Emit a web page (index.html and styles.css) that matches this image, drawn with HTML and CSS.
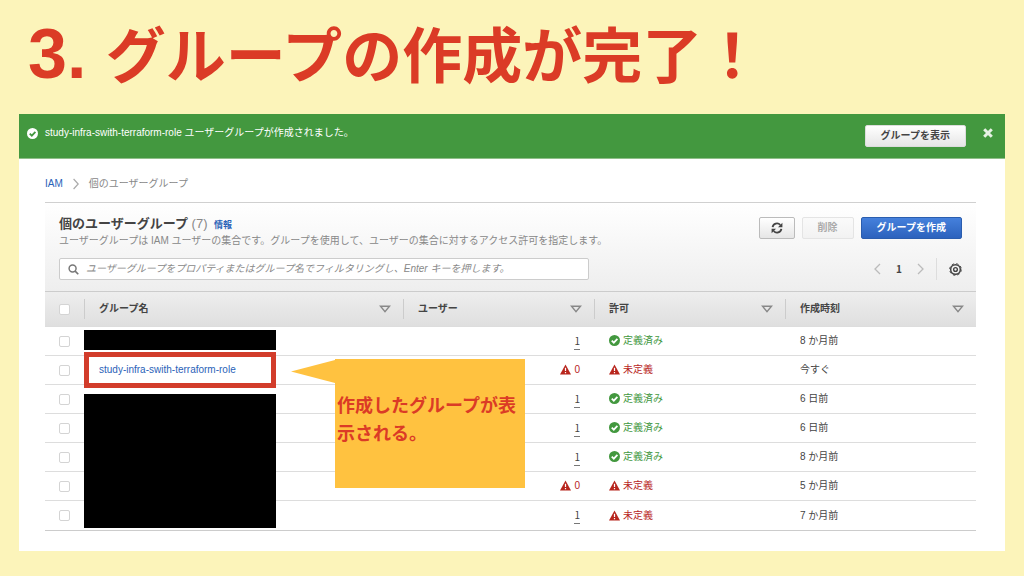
FILE: index.html
```html
<!DOCTYPE html>
<html lang="ja">
<head>
<meta charset="utf-8">
<title>グループの作成が完了</title>
<link rel="stylesheet" href="styles.css">
</head>
<body>
<svg class="defs" aria-hidden="true">
  <symbol id="ok" viewBox="0 0 16 16"><circle cx="8" cy="8" r="8" fill="currentColor"/><path class="tick" d="M4 8.2l3 3 5.2-5.4" fill="none" stroke-width="2.6"/></symbol>
  <symbol id="warn" viewBox="0 0 16 16"><path d="M8 .8L16 15.2H0z" fill="currentColor"/><path d="M8 5.6v4.6M8 11.5v2" stroke="#fff" stroke-width="1.8"/></symbol>
  <symbol id="sort" viewBox="0 0 12 8"><path d="M1.5 1.2h9L6 6.6z" fill="none" stroke="currentColor" stroke-width="1.4"/></symbol>
</svg>
<h1 class="slide-title"><span class="num">3. </span>グループの作成が完了！</h1>
<main class="panel">
  <div class="banner" role="status">
    <svg class="icon banner-ok"><use href="#ok"/></svg>
    <p class="banner-text">study-infra-swith-terraform-role ユーザーグループが作成されました。</p>
    <button class="btn show">グループを表示</button>
    <button class="close" aria-label="閉じる"><svg viewBox="0 0 10 10"><path d="M1.2 1.2l7.6 7.6M8.8 1.2L1.2 8.8" stroke="currentColor" stroke-width="3"/></svg></button>
  </div>
  <nav class="crumbs">
    <a href="#">IAM</a>
    <svg class="crumb-sep" viewBox="0 0 6 12"><path d="M.6 1l4.6 5L.6 11" fill="none" stroke="currentColor" stroke-width="1.2"/></svg>
    <span>個のユーザーグループ</span>
  </nav>
  <section class="groups">
    <header class="head">
      <div class="head-row">
        <div class="head-text">
          <h2>個のユーザーグループ <span class="count">(7)</span> <a class="info" href="#">情報</a></h2>
          <p>ユーザーグループは IAM ユーザーの集合です。グループを使用して、ユーザーの集合に対するアクセス許可を指定します。</p>
        </div>
        <div class="actions">
          <button class="btn refresh" aria-label="更新"><svg viewBox="0 0 12 12"><path d="M1.6 5.2A4.4 4.4 0 0 1 9.3 3M10.4 6.8A4.4 4.4 0 0 1 2.7 9" fill="none" stroke="currentColor" stroke-width="1.8"/><path d="M11.4 .8v4.4H7zM.6 11.2V6.8H5z" fill="currentColor"/></svg></button>
          <button class="btn" disabled>削除</button>
          <button class="btn primary">グループを作成</button>
        </div>
      </div>
      <div class="head-row tools">
        <label class="search">
          <svg viewBox="0 0 12 12"><circle cx="5" cy="5" r="3.8" fill="none" stroke="currentColor" stroke-width="1.6"/><path d="M7.8 7.8l3.4 3.4" stroke="currentColor" stroke-width="1.8"/></svg>
          <input type="text" aria-label="フィルター" placeholder="ユーザーグループをプロパティまたはグループ名でフィルタリングし、Enter キーを押します。">
        </label>
        <div class="pager">
          <button class="arrow" aria-label="前へ"><svg viewBox="0 0 7 12"><path d="M6 1L1 6l5 5" fill="none" stroke="currentColor" stroke-width="1.3"/></svg></button>
          <span class="page">1</span>
          <button class="arrow" aria-label="次へ"><svg viewBox="0 0 7 12"><path d="M1 1l5 5-5 5" fill="none" stroke="currentColor" stroke-width="1.3"/></svg></button>
          <button class="gear" aria-label="設定"><svg viewBox="0 0 14 14" fill="none" stroke="currentColor"><circle cx="7" cy="7" r="5.2" stroke-width="1.6"/><circle cx="7" cy="7" r="6.3" stroke-width="1" stroke-dasharray="2.6 2.35"/><circle cx="7" cy="7" r="2" stroke-width="1.5"/></svg></button>
        </div>
      </div>
    </header>
    <div class="table-wrap">
      <table>
        <colgroup><col class="c-check"><col><col class="c-data"><col class="c-data"><col class="c-data"></colgroup>
        <thead>
          <tr>
            <th><input type="checkbox" aria-label="すべて選択"></th>
            <th><div class="th">グループ名<button aria-label="並べ替え"><svg><use href="#sort"/></svg></button></div></th>
            <th><div class="th">ユーザー<button aria-label="並べ替え"><svg><use href="#sort"/></svg></button></div></th>
            <th><div class="th">許可<button aria-label="並べ替え"><svg><use href="#sort"/></svg></button></div></th>
            <th><div class="th">作成時刻<button aria-label="並べ替え"><svg><use href="#sort"/></svg></button></div></th>
          </tr>
        </thead>
        <tbody>
          <tr><td><input type="checkbox" aria-label="選択"></td><td></td><td class="users"><span class="n">1</span></td><td class="ok"><svg class="icon"><use href="#ok"/></svg>定義済み</td><td>8 か月前</td></tr>
          <tr><td><input type="checkbox" aria-label="選択"></td><td><a href="#">study-infra-swith-terraform-role</a></td><td class="users bad"><svg class="icon"><use href="#warn"/></svg>0</td><td class="bad"><svg class="icon"><use href="#warn"/></svg>未定義</td><td>今すぐ</td></tr>
          <tr><td><input type="checkbox" aria-label="選択"></td><td></td><td class="users"><span class="n">1</span></td><td class="ok"><svg class="icon"><use href="#ok"/></svg>定義済み</td><td>6 日前</td></tr>
          <tr><td><input type="checkbox" aria-label="選択"></td><td></td><td class="users"><span class="n">1</span></td><td class="ok"><svg class="icon"><use href="#ok"/></svg>定義済み</td><td>6 日前</td></tr>
          <tr><td><input type="checkbox" aria-label="選択"></td><td></td><td class="users"><span class="n">1</span></td><td class="ok"><svg class="icon"><use href="#ok"/></svg>定義済み</td><td>8 か月前</td></tr>
          <tr><td><input type="checkbox" aria-label="選択"></td><td></td><td class="users bad"><svg class="icon"><use href="#warn"/></svg>0</td><td class="bad"><svg class="icon"><use href="#warn"/></svg>未定義</td><td>5 か月前</td></tr>
          <tr><td><input type="checkbox" aria-label="選択"></td><td></td><td class="users"><span class="n">1</span></td><td class="bad"><svg class="icon"><use href="#warn"/></svg>未定義</td><td>7 か月前</td></tr>
        </tbody>
      </table>
      <div class="mask mask-top"></div>
      <div class="frame"></div>
      <div class="mask mask-bottom"></div>
      <div class="callout">
        <svg class="tail" viewBox="0 0 44 24" preserveAspectRatio="none"><path d="M0 12.5L44 1v23z" fill="currentColor"/></svg>
        <p>作成したグループが表示される。</p>
      </div>
    </div>
  </section>
</main>
</body>
</html>
```
FILE: styles.css
```css
* { box-sizing: border-box; }

body {
  margin: 0;
  padding: 0 19px 25px;
  min-height: 100vh;
  background: #fcf4ba;
  color: #444;
  font: 10px/16px "Liberation Sans", "Noto Sans CJK JP", sans-serif;
}

h1, h2, p { margin: 0; }
svg { display: block; flex: none; }
a { color: #2a62b8; text-decoration: none; }
button, input { font: inherit; color: inherit; margin: 0; }
button { padding: 0; border: 0; background: none; }

.defs { position: absolute; width: 0; height: 0; }

.slide-title {
  padding: 9px 9px 0;
  height: 114px;
  color: #db3b26;
  font-size: 60px;
  line-height: 90px;
  font-weight: 700;
  white-space: nowrap;
}
.num { font-size: 70px; white-space: pre; }

.panel { background: #fff; padding-bottom: 20px; }

.icon { width: 11px; height: 11px; }
.tick { stroke: var(--tick, #fff); }

.banner {
  display: flex;
  align-items: flex-start;
  height: 45px;
  padding: 11px 12px 0 8px;
  background: #43983f;
  border-bottom: 1px solid #8fbf89;
  color: #fff;
}
.banner-ok { --tick: #43983f; margin: 3px 7px 0 0; }
.banner-text { flex: 1; }
.close { margin: 3px 0 0 17px; color: #e6f2e4; }
.close svg { width: 10px; height: 10px; }

.btn {
  display: flex;
  align-items: center;
  justify-content: center;
  height: 22px;
  padding: 0 15px;
  border: 1px solid #bbb;
  border-radius: 2px;
  background: linear-gradient(#fff, #e6e6e6);
  color: #444;
  font-weight: 700;
}
.btn:disabled { color: #aaa; border-color: #e4e4e4; background: linear-gradient(#fafafa, #f2f2f2); }
.btn.show { border-color: #ddd; }
.btn.primary { color: #fff; border-color: #2a5dae; background: linear-gradient(#4580dc, #2c62bd); }
.refresh { padding: 0 11px; }
.refresh svg { width: 12px; height: 12px; }

.crumbs {
  display: flex;
  align-items: center;
  gap: 10px;
  padding: 17px 26px 10px;
  color: #888;
}
.crumb-sep { width: 6px; height: 12px; color: #aaa; }

.groups { margin: 0 29px 0 26px; }

.head {
  height: 89px;
  padding: 13px 14px 0;
  border-top: 1px solid #d0d0d0;
  background: linear-gradient(#fff, #eee);
}
.head-row { display: flex; justify-content: space-between; align-items: flex-start; }
.head h2 { font-size: 13px; line-height: 16px; }
.count { font-weight: 400; color: #888; }
.info { margin-left: 3px; font-size: 9px; }
.head p { color: #888; }
.actions { display: flex; gap: 7px; padding-top: 1px; }
.tools { align-items: center; margin-top: 9px; }

.search {
  display: flex;
  align-items: center;
  gap: 7px;
  width: 530px;
  height: 22px;
  padding: 0 8px;
  border: 1px solid #ccc;
  border-radius: 2px;
  background: #fff;
}
.search svg { width: 11px; height: 11px; color: #777; }
.search input { flex: 1; min-width: 0; padding: 0; border: 0; outline: 0; background: none; }
.search input::placeholder { color: #888; font-style: italic; opacity: 1; }

.pager { display: flex; align-items: center; }
.arrow { color: #bbb; }
.arrow svg { width: 7px; height: 12px; }
.page { width: 36px; text-align: center; font-weight: 700; font-family: "Noto Sans CJK JP", sans-serif; }
.gear { display: flex; align-items: center; height: 22px; margin-left: 12px; padding-left: 12px; border-left: 1px solid #ddd; }
.gear svg { width: 13px; height: 13px; }

.table-wrap { position: relative; }
table { width: 100%; table-layout: fixed; border-collapse: separate; border-spacing: 0; border-bottom: 1px solid #ccc; }
.c-check { width: 39px; }
.c-data { width: 191px; }
th, td { padding: 0 0 0 15px; text-align: left; }
th:first-child, td:first-child { padding-left: 14px; }
th { height: 36px; border-top: 1px solid #ccc; border-bottom: 1px solid #ddd; background: linear-gradient(#eee, #dfdfdf); }
th + th { padding-left: 0; }
.th { display: flex; justify-content: space-between; align-items: center; height: 20px; padding: 0 12px 0 14px; border-left: 1px solid #ccc; }
.th svg { width: 12px; height: 8px; color: #888; }
td { height: 29px; border-bottom: 1px solid #ddd; }
tr:last-child td { border-bottom: 0; }
td .icon { display: inline-block; margin-right: 3px; vertical-align: -2px; }

input[type="checkbox"] {
  display: block;
  appearance: none;
  width: 11px;
  height: 11px;
  border: 1px solid #d4d4d4;
  border-radius: 2px;
  background: #fff;
}

td.users { padding: 0 14px 0 0; text-align: right; }
.n { display: inline-block; line-height: 16px; border-bottom: 1px dashed #777; font-family: "Noto Sans CJK JP", sans-serif; }
.ok { color: #43983f; }
.bad { color: #b8251d; }

.mask, .frame { position: absolute; left: 39px; width: 192px; }
.mask { background: #000; }
.mask-top { top: 39px; height: 20px; }
.mask-bottom { top: 103px; height: 134px; }
.frame { top: 61px; height: 36px; border: 5px solid #d23c2b; }

.callout {
  position: absolute;
  top: 68px;
  left: 290px;
  width: 190px;
  padding: 33px 2px 40px;
  background: #ffc240;
  color: #db3b26;
  font-size: 18px;
  line-height: 28px;
  font-weight: 700;
}
.tail { position: absolute; top: 0; right: 100%; width: 44px; height: 24px; color: #ffc240; }
```
